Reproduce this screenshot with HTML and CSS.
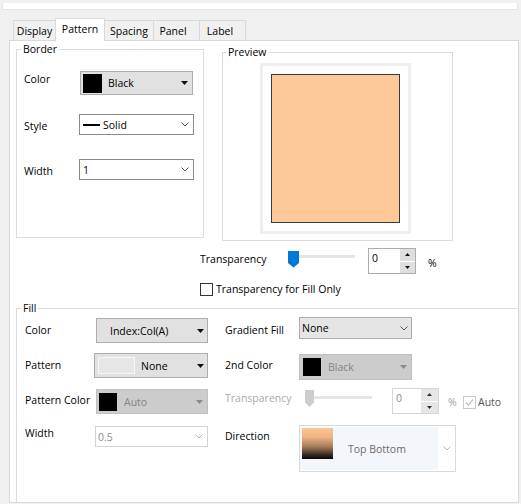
FILE: index.html
```html
<!DOCTYPE html>
<html lang="en">
<head>
<meta charset="utf-8">
<title>Pattern</title>
<link rel="stylesheet" href="styles.css">
</head>
<body>
<div class="topbar"></div>
<div class="tabs">
  <div class="tab tab-display">Display</div>
  <div class="tab tab-pattern active">Pattern</div>
  <div class="tab tab-spacing">Spacing</div>
  <div class="tab tab-panel">Panel</div>
  <div class="tab tab-label">Label</div>
</div>
<div class="panel">
  <div class="top">
    <fieldset class="group group-border">
      <legend>Border</legend>
      <div class="brow brow-color">
        <span class="lbl">Color</span>
        <div class="combo combo-bcolor">
          <span class="swatch swatch-lg"></span>
          <span class="ctext ctext-black">Black</span>
          <svg class="tri" width="7" height="4" viewBox="0 0 7 4"><path d="M0 0h7L3.5 4z" fill="#111"/></svg>
        </div>
      </div>
      <div class="brow brow-style">
        <span class="lbl">Style</span>
        <div class="combo combo-edit combo-bstyle">
          <span class="line-glyph"></span>
          <span class="ctext ctext-solid">Solid</span>
          <svg class="chev" width="8" height="5" viewBox="0 0 8 5"><path d="M0.5 0.5L4 4L7.5 0.5" fill="none" stroke="#555" stroke-width="1"/></svg>
        </div>
      </div>
      <div class="brow brow-width">
        <span class="lbl">Width</span>
        <div class="combo combo-edit combo-bwidth">
          <span class="ctext">1</span>
          <svg class="chev" width="8" height="5" viewBox="0 0 8 5"><path d="M0.5 0.5L4 4L7.5 0.5" fill="none" stroke="#555" stroke-width="1"/></svg>
        </div>
      </div>
    </fieldset>
    <fieldset class="group group-preview">
      <legend>Preview</legend>
      <div class="frame"><div class="sample"></div></div>
    </fieldset>
  </div>

  <div class="trow">
    <span class="lbl-trans">Transparency</span>
    <svg class="slider" width="68" height="26" viewBox="0 0 68 26">
      <rect x="11" y="7" width="56" height="3" fill="#e4e4e4"/>
      <path d="M0 3h11v12l-5.5 4.5L0 15z" fill="#0078d7"/>
    </svg>
    <div class="spin">
      <span class="spin-val">0</span>
      <div class="spin-btns">
        <span class="sb"><svg width="5" height="3" viewBox="0 0 5 3"><path d="M0 3h5L2.5 0z" fill="#111"/></svg></span>
        <span class="sb"><svg width="5" height="3" viewBox="0 0 5 3"><path d="M0 0h5L2.5 3z" fill="#111"/></svg></span>
      </div>
    </div>
    <span class="pct">%</span>
  </div>

  <div class="crow">
    <span class="check"></span>
    <span class="crow-text">Transparency for Fill Only</span>
  </div>

  <fieldset class="group group-fill">
    <legend>Fill</legend>
    <div class="fgrid">
      <span class="fl fl-color">Color</span>
      <div class="combo fc-color">
        <span class="ctext">Index:Col(A)</span>
        <svg class="tri" width="7" height="4" viewBox="0 0 7 4"><path d="M0 0h7L3.5 4z" fill="#111"/></svg>
      </div>
      <span class="fl fl-gradient">Gradient Fill</span>
      <div class="combo fc-gradient">
        <span class="ctext">None</span>
        <svg class="chev" width="8" height="5" viewBox="0 0 8 5"><path d="M0.5 0.5L4 4L7.5 0.5" fill="none" stroke="#555" stroke-width="1"/></svg>
      </div>

      <span class="fl fl-pattern">Pattern</span>
      <div class="combo fc-pattern">
        <span class="pswatch"></span>
        <span class="ctext ctext-none">None</span>
        <svg class="tri" width="7" height="4" viewBox="0 0 7 4"><path d="M0 0h7L3.5 4z" fill="#111"/></svg>
      </div>
      <span class="fl fl-2nd">2nd Color</span>
      <div class="combo combo-dis fc-2nd">
        <span class="swatch swatch-sm"></span>
        <span class="ctext ctext-dis">Black</span>
        <svg class="tri" width="7" height="4" viewBox="0 0 7 4"><path d="M0 0h7L3.5 4z" fill="#8a8a8a"/></svg>
      </div>

      <span class="fl fl-pcolor">Pattern Color</span>
      <div class="combo combo-dis fc-pcolor">
        <span class="swatch swatch-sm"></span>
        <span class="ctext ctext-dis">Auto</span>
        <svg class="tri" width="7" height="4" viewBox="0 0 7 4"><path d="M0 0h7L3.5 4z" fill="#8a8a8a"/></svg>
      </div>
      <span class="fl fl-trans">Transparency</span>
      <div class="trans-cell">
        <svg class="slider-dis" width="75" height="26" viewBox="0 0 75 26">
          <rect x="15" y="8" width="58" height="3" fill="#e6e6e6"/>
          <path d="M6 2h9v12.5l-4.5 4.5L6 14.5z" fill="#cdcdcd"/>
        </svg>
        <div class="spin spin-dis">
          <span class="spin-val">0</span>
          <div class="spin-btns">
            <span class="sb"><svg width="5" height="3" viewBox="0 0 5 3"><path d="M0 3h5L2.5 0z" fill="#333"/></svg></span>
            <span class="sb"><svg width="5" height="3" viewBox="0 0 5 3"><path d="M0 0h5L2.5 3z" fill="#333"/></svg></span>
          </div>
        </div>
        <span class="pct-dis">%</span>
        <span class="check-dis"><svg width="11" height="11" viewBox="0 0 11 11"><path d="M2 5.5l2.5 2.5L9 2.5" fill="none" stroke="#b4b4b4" stroke-width="1.1"/></svg></span>
        <span class="auto">Auto</span>
      </div>

      <span class="fl fl-width">Width</span>
      <div class="combo fc-width">
        <span class="ctext">0.5</span>
        <svg class="chev" width="8" height="5" viewBox="0 0 8 5"><path d="M0.5 0.5L4 4L7.5 0.5" fill="none" stroke="#b3b3b3" stroke-width="1"/></svg>
      </div>
      <span class="fl fl-direction">Direction</span>
      <div class="combo fc-direction">
        <div class="dir-hl">
          <span class="grad"></span>
          <span class="dir-text">Top Bottom</span>
        </div>
        <svg class="chev dir-chev" width="8" height="5" viewBox="0 0 8 5"><path d="M0.5 0.5L4 4L7.5 0.5" fill="none" stroke="#b8b8b8" stroke-width="1"/></svg>
      </div>
    </div>
  </fieldset>
</div>
</body>
</html>
```

FILE: styles.css
```css
* { box-sizing: border-box; }
html, body { margin: 0; padding: 0; }
body {
  width: 521px;
  height: 504px;
  overflow: hidden;
  background: #f0f0f0;
  font-family: "Open Sans", "Noto Sans", "DejaVu Sans", sans-serif;
  font-size: 10.5px;
  line-height: 16px;
  color: #000;
}

/* top strip */
.topbar {
  margin: 3px 3px 0 2px;
  height: 7px;
  background: #fff;
  border: 1px solid #e4e4e4;
  border-top: none;
}

/* tabs */
.tabs {
  display: flex;
  align-items: flex-end;
  height: 23px;
  margin: 8px 0 -1px 13px;
  position: relative;
  z-index: 1;
}
.tab {
  height: 20px;
  margin-bottom: 1px;
  padding-top: 2px;
  border: 1px solid #d9d9d9;
  border-right: none;
  border-bottom: none;
  background: #f0f0f0;
  text-align: center;
  white-space: nowrap;
}
.tab-display { width: 42px; }
.tab-pattern { width: 50px; }
.tab-spacing { width: 49px; margin-left: -1px; }
.tab-panel { width: 46px; padding-right: 7px; }
.tab-label { width: 47px; padding-right: 5px; border-right: 1px solid #d9d9d9; }
.tab.active {
  height: 23px;
  margin-bottom: 0;
  padding-top: 2px;
  background: #fff;
  border-right: 1px solid #d9d9d9;
}

/* panel */
.panel {
  margin-left: 9px;
  width: 510px;
  height: 463px;
  background: #fff;
  border: 1px solid #d9d9d9;
}
.top {
  display: flex;
  align-items: flex-start;
  padding-left: 6px;
}
.group {
  margin: 0;
  padding: 0;
  min-width: 0;
  border: 1px solid #dcdcdc;
  flex-shrink: 0;
}
.group legend {
  padding: 0 2px;
  line-height: 16px;
}
.group.group-border { width: 188px; height: 197px; }
.group-border legend { margin-left: 4px; }
.group.group-preview { width: 231px; height: 197px; margin: 3px 0 0 18px; }
.group-preview legend { margin-left: 3px; }

.brow {
  display: flex;
  align-items: flex-start;
  padding-left: 7px;
}
.brow .lbl { width: 56px; flex-shrink: 0; }
.brow-color { margin-top: 14px; }
.brow-style { margin-top: 19px; }
.brow-width { margin-top: 24px; }
.brow-style .lbl, .brow-width .lbl { margin-top: 4px; }

/* combos */
.combo {
  display: flex;
  align-items: center;
  flex-shrink: 0;
  border: 1px solid #adadad;
  white-space: nowrap;
}
.combo .tri, .combo .chev { margin-left: auto; flex-shrink: 0; }
.combo-bcolor {
  width: 113px;
  height: 24px;
  background: #e1e1e1;
  padding: 0 4px 0 2px;
}
.swatch { background: #000; flex-shrink: 0; }
.swatch-lg { width: 19px; height: 19px; }
.swatch-sm { width: 18px; height: 18px; }
.ctext-black { margin-left: 6px; }
.combo-edit {
  width: 115px;
  height: 21px;
  margin-left: -1px;
  background: #fff;
  border-color: #8a8a8a;
  padding: 0 4px 0 3px;
}
.line-glyph { width: 17px; height: 2px; background: #000; flex-shrink: 0; }
.ctext-solid { margin-left: 3px; }

/* preview */
.frame {
  margin: 3px 0 0 37px;
  width: 151px;
  height: 171px;
  border: 3px solid #eeeeee;
  padding: 8px;
}
.sample {
  width: 129px;
  height: 149px;
  background: #fdc998;
  border: 1px solid #3a3a3a;
}

/* transparency row */
.trow {
  display: flex;
  align-items: flex-start;
  height: 26px;
  margin-top: 7px;
  padding-left: 190px;
}
.lbl-trans { width: 88px; margin-top: 3px; flex-shrink: 0; }
.slider { flex-shrink: 0; }
.spin {
  display: flex;
  width: 48px;
  height: 26px;
  margin-left: 12px;
  border: 1px solid #acacac;
  background: #fff;
  flex-shrink: 0;
}
.spin-val { flex: 1; padding: 1px 0 0 3px; }
.spin-btns {
  width: 15px;
  display: flex;
  flex-direction: column;
  gap: 1px;
  background: #fff;
}
.sb {
  flex: 1;
  display: flex;
  align-items: center;
  justify-content: center;
  background: #dfdfdf;
}
.pct { margin: 7px 0 0 12px; }

.crow {
  display: flex;
  align-items: center;
  height: 16px;
  margin-top: 7px;
  padding-left: 190px;
}
.check {
  width: 13px;
  height: 13px;
  border: 1px solid #333;
  background: #fff;
  margin-right: 3px;
  flex-shrink: 0;
}

/* fill */
.group.group-fill {
  width: 502px;
  height: 202px;
  margin: 3px 0 0 6px;
  border-right: none;
  border-bottom: none;
}
.group-fill legend { margin-left: 4px; }
.fgrid {
  display: grid;
  grid-template-columns: 69px 131px 74px 1fr;
  grid-template-rows: 36px 35px 37px 47px;
  align-items: start;
  padding-left: 8px;
  margin-top: 1px;
}
.fl { white-space: nowrap; }
.fl-color, .fl-gradient { margin-top: 5px; }
.fl-pattern, .fl-2nd, .fl-pcolor { margin-top: 4px; }
.fl-trans { margin-top: 2px; color: #a9a9a9; }
.fl-width { margin-top: 0; }
.fl-direction { margin-top: 3px; }

.fc-color {
  width: 112px;
  height: 25px;
  margin: 1px 0 0 2px;
  background: #e1e1e1;
  padding: 0 3px 0 13px;
}
.fc-gradient {
  width: 113px;
  height: 22px;
  background: #e5e5e5;
  padding: 0 3px 0 2px;
}
.fc-pattern {
  width: 114px;
  height: 25px;
  background: #e1e1e1;
  padding: 0 3px 0 3px;
}
.pswatch {
  width: 37px;
  height: 17px;
  background: #e6e6e6;
  border: 1px solid #f6f6f6;
  flex-shrink: 0;
}
.ctext-none { margin-left: 6px; }
.combo-dis {
  background: #cccccc;
  border-color: #c0c0c0;
}
.ctext-dis { margin-left: 7px; color: #858585; }
.fc-2nd {
  width: 113px;
  height: 26px;
  margin-top: 1px;
  padding: 0 4px 0 3px;
}
.fc-pcolor {
  width: 112px;
  height: 25px;
  margin: 1px 0 0 2px;
  padding: 0 4px 0 2px;
}
.trans-cell {
  display: flex;
  align-items: flex-start;
}
.slider-dis { flex-shrink: 0; }
.spin.spin-dis {
  width: 47px;
  margin-left: 18px;
  border-color: #d6d6d6;
}
.spin-dis .spin-val { color: #8d8d8d; }
.spin-dis .spin-btns { width: 17px; }
.spin-dis .sb { background: #e6e6e6; }
.pct-dis {
  width: 15px;
  margin: 6px 0 0 9px;
  color: #a0a0a0;
  flex-shrink: 0;
}
.check-dis {
  width: 13px;
  height: 13px;
  margin-top: 8px;
  border: 1px solid #cacaca;
  background: #fff;
  display: flex;
  align-items: center;
  justify-content: center;
  flex-shrink: 0;
}
.auto { margin: 6px 0 0 2px; color: #555; }

.fc-width {
  width: 113px;
  height: 21px;
  margin: 1px 0 0 1px;
  background: #fff;
  border-color: #d3d3d3;
  color: #8c8c8c;
  padding: 0 4px 0 2px;
}
.fc-direction {
  width: 157px;
  height: 47px;
  background: #fff;
  border-color: #d9d9d9;
  padding: 1px 4px 1px 0;
  align-items: stretch;
}
.dir-hl {
  width: 138px;
  display: flex;
  align-items: flex-start;
  background: #f3f7fc;
  flex-shrink: 0;
}
.grad {
  width: 31px;
  height: 31px;
  margin: 1px 0 0 2px;
  flex-shrink: 0;
  background: linear-gradient(to bottom, #fcc590 0%, #eeb382 30%, #a57c5a 60%, #3d2e24 85%, #060606 100%);
}
.dir-text { margin: 14px 0 0 15px; color: #6b6b6b; }
.dir-chev { align-self: center; }
```
